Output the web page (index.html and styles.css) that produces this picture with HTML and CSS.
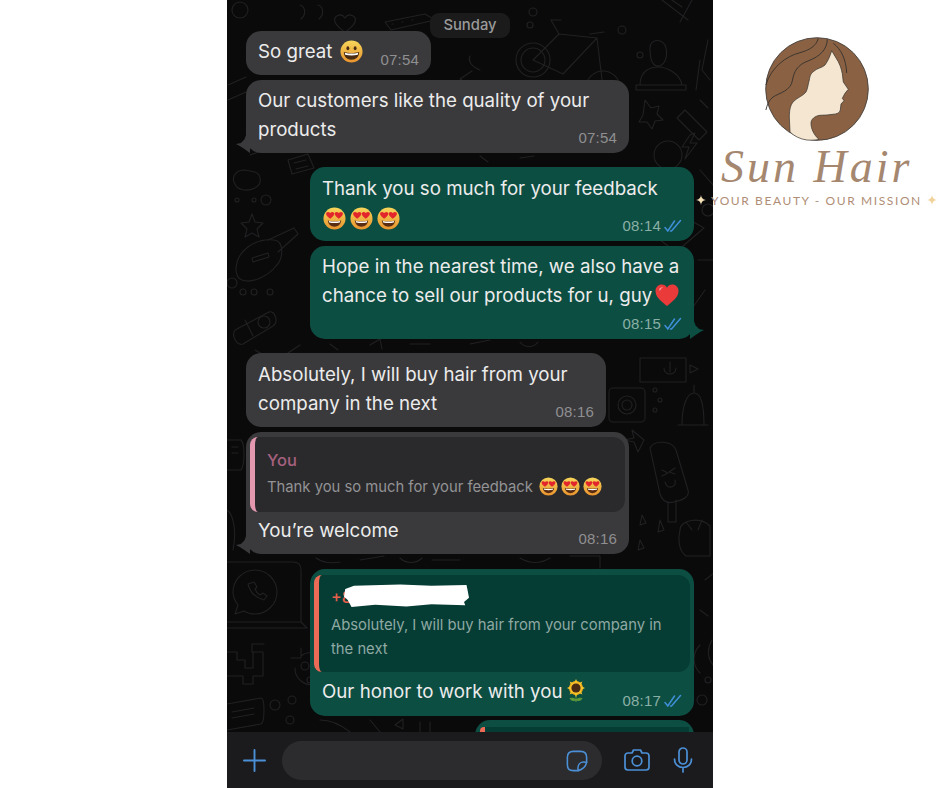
FILE: index.html
```html
<!DOCTYPE html>
<html lang="en">
<head>
<meta charset="utf-8">
<title>Sun Hair customer feedback</title>
<link rel="stylesheet" href="styles.css">
</head>
<body>
<svg class="defs" width="0" height="0" aria-hidden="true">
  <defs>
    <linearGradient id="face" x1="0" y1="0" x2="0" y2="1">
      <stop offset="0" stop-color="#f7d65a"/><stop offset="1" stop-color="#e8932e"/>
    </linearGradient>
    <symbol id="grin" viewBox="0 0 24 24">
      <circle cx="12" cy="12" r="11.5" fill="url(#face)"/>
      <ellipse cx="8.2" cy="8.6" rx="1.5" ry="2.2" fill="#4a2c12"/>
      <ellipse cx="15.8" cy="8.6" rx="1.5" ry="2.2" fill="#4a2c12"/>
      <path d="M4 12.5c5 1.6 11 1.6 16 0 0 5-3.4 8-8 8s-8-3-8-8z" fill="#4a2c12"/>
      <path d="M5 13.2c4.600 1.300 9.400 1.300 14 0l-.4 2.300c-4.200 1-9 1-13.200 0z" fill="#fff"/>
    </symbol>
    <symbol id="love" viewBox="0 0 24 24">
      <circle cx="12" cy="12" r="11.5" fill="url(#face)"/>
      <path d="M5 14c4.500 1.200 9.500 1.200 14 0-.4 4-3.300 6.500-7 6.500S5.400 18 5 14z" fill="#5a2c12"/>
      <path d="M6 14.500c4 .9 8 .9 12 0l-.5 1.600c-3.600.7-7.400.7-11 0z" fill="#fff"/>
      <path d="M7.500 12.200C5.200 10.500 3.200 9 3.200 7c0-1.600 2.300-2.600 4.300-.8 2-1.800 4.300-.8 4.300.8 0 2-2 3.500-4.300 5.200z" fill="#e2262c"/>
      <path d="M16.500 12.200c-2.300-1.700-4.300-3.200-4.300-5.200 0-1.600 2.300-2.600 4.300-.8 2-1.800 4.300-.8 4.300.8 0 2-2 3.500-4.300 5.200z" fill="#e2262c"/>
    </symbol>
    <symbol id="heart" viewBox="0 0 24 24">
      <path d="M12 23C5 17.500.5 13.500.5 8 .5 4 3.500 1.500 6.700 1.500c2.300 0 4.200 1.200 5.300 3.200 1.100-2 3-3.200 5.300-3.200 3.200 0 6.200 2.500 6.200 6.500 0 5.500-4.500 9.500-11.500 15z" fill="#ea3a3a"/>
      <path d="M4 6.500C5 4.500 7 4 8 4.500 6.500 5 5.500 6 5 8z" fill="#f7a0a0"/>
    </symbol>
    <symbol id="sunflower" viewBox="0 0 22 24">
      <path d="M11 17v6M11 21c-2-2-4-2-6-1.500 1 2 3.500 2.500 6 1.500zm0 0c2-2 4-2 6-1.500-1 2-3.500 2.500-6 1.500z" fill="#5f9a3a" stroke="#5f9a3a"/>
      <circle cx="11" cy="9" r="7" fill="#f0ad1a"/>
      <g fill="#f8c22a">
        <path d="M11 0l2.400 5h-4.800zM11 18l2.400-5H8.600zM2 9l5-2.400v4.800zM20 9l-5-2.400v4.800zM4.600 2.600l5 2.200-2.800 2.800zM17.400 2.600l-5 2.200 2.800 2.800zM4.600 15.400l5-2.200-2.800-2.800zM17.400 15.400l-5-2.200 2.800-2.800z"/>
      </g>
      <circle cx="11" cy="9" r="4.600" fill="#4a2a14"/>
    </symbol>
    <symbol id="ticks" viewBox="0 0 18 14">
      <path d="M1 8.500l2.800 3.500L10.500 2M6.500 12l1 0L16.500 1.500" fill="none" stroke="#3f8fd8" stroke-width="1.500" stroke-linecap="round"/>
    </symbol>
    <symbol id="spark" viewBox="0 0 12 12">
      <path d="M6 0c.4 3.500 2 5.300 6 6-4 .7-5.600 2.500-6 6-.4-3.500-2-5.300-6-6 4-.7 5.600-2.500 6-6z"/>
    </symbol>
  </defs>
</svg>

<div class="page">
  <div class="side"></div>

  <main class="phone">
    <section class="chat">
      <svg class="doodles" viewBox="0 0 486 732" aria-hidden="true">
        <g transform="translate(-227 0)" fill="none" stroke="#212123" stroke-width="1.100" stroke-linecap="round" stroke-linejoin="round">
          <circle cx="533" cy="60" r="17"/><circle cx="533" cy="60" r="12"/><circle cx="603" cy="88" r="17"/>
          <path d="M533 60l26-26 38 4-34 36-30-14M559 34l-8-14h10M597 38l6 50M590 34l14-2"/>
          <circle cx="640" cy="55" r="3"/><circle cx="622" cy="30" r="4"/><circle cx="533" cy="12" r="4"/><circle cx="530" cy="25" r="3"/>
          <path d="M650 48c0-10 14-10 16 0 2 10-2 18-8 18s-8-8-8-18zM640 85c0-14 10-18 18-18s22 6 24 18zM636 85h50v5h-50z"/>
          <path d="M662 0l26 20M672 0l10 7M692 0l-12 22"/>
          <path d="M645 100l6 8 8-2-2 8 6 6-8 1-3 8-5-7-8 0 4-7z"/>
          <path d="M685 110l22 22-8 8-22-22zM700 100l8 8"/>
          <path d="M690 135l-8 12h7l-4 12 12-16h-7l5-10z"/>
          <circle cx="668" cy="155" r="14"/>
          <circle cx="240" cy="10" r="8"/><path d="M300 5c6 2 6 10 1 14M318 5c6 2 6 10 1 14"/>
          <path d="M345 18c-4-6-12-2-10 4 2 5 8 8 10 11 2-3 8-6 10-11 2-6-6-10-10-4z"/>
          <path d="M385 22l40-8 10 6-44 10zM392 24h1M402 22h1M412 20h1"/>
          <path d="M228 85l18-8M228 100l18-8"/>
          <path d="M480 70c-10-4-12-10-10-14M470 85l-10-6 12-8"/>
          <path d="M245 170c-10 0-14 8-10 14 2 6 12 8 20 4 8-4 6-14 0-16z"/>
          <path d="M288 160l20-6 6 14-22 6zM294 163l12-3M296 169l12-3"/>
          <path d="M252 214l3 8 8 1-6 6 2 8-7-4-7 4 2-8-6-6 8-1z"/>
          <circle cx="266" cy="200" r="5"/><circle cx="254" cy="200" r="2"/><circle cx="237" cy="200" r="2"/>
          <path d="M236 270c0-20 20-32 38-30 10 1 10 18 2 26-8 10-24 18-34 14-4-1-6-6-6-10z"/><path d="M252 258l16-5 1 4-16 5z"/>
          <path d="M268 240l26-12 4 6-20 18"/>
          <path d="M235 330l34-18c6-2 10 10 4 14l-30 18c-6 2-12-8-8-14zM245 320l8 16"/><circle cx="264" cy="322" r="6"/>
          <path d="M255 350l14 8M300 345l-12 8"/>
          <circle cx="232" cy="283" r="5"/><circle cx="243" cy="292" r="3"/><circle cx="254" cy="292" r="3"/><circle cx="270" cy="292" r="3"/>
          <rect x="609" y="388" width="36" height="34" rx="4"/><circle cx="627" cy="405" r="9"/><circle cx="627" cy="405" r="5"/>
          <path d="M682 425c0-22 6-32 12-32s10 10 10 32zM678 425h30M694 393v-8"/>
          <path d="M640 358h46v24h-46zM670 362v10M664 368c0 8 12 8 12 0M690 365l8 4-8 4z"/>
          <path d="M632 430l12 10-6 12-4-10-10-2 10-2z"/><circle cx="655" cy="390" r="2"/><circle cx="660" cy="400" r="2"/><circle cx="655" cy="410" r="2"/>
          <path d="M650 448c4-8 22-8 26 2l12 40c2 6-4 10-14 12-8 2-12-2-14-8zM668 502v20h8v-22"/>
          <path d="M662 470l6 3-6 3M675 468l-6 4 6 2M665 482c2 8 12 6 10-2"/>
          <path d="M680 530c0-10 20-14 30-4v30h-24c-8-6-8-18-6-26zM686 522l6 8M702 520l-4 10"/>
          <path d="M642 515l4 8-6 2zM640 540l4 8-6 2zM660 520l4 10-6 2z"/>
          <path d="M227 440h14c4 4 4 24 0 30h-14M232 447h6M232 453h6"/>
          <path d="M227 510c6 4 10 20 6 40"/>
          <path d="M227 562h66c6 0 8 3 8 8v52H227M301 622l6 6h-80"/>
          <path d="M233 592c0-12 10-22 22-22s22 10 22 22-10 22-22 22c-4 0-8-1-11-3l-9 3 3-9c-3-4-5-8-5-13z"/>
          <path d="M248 584c2 8 8 14 16 16l3-4-4-3-3 2c-2-1-4-3-5-6l2-2-3-5z"/>
          <path d="M227 652h10v8h8v8h8v-16h10v24h-10v8h-10v-8h-26M252 652v-8h12"/>
          <path d="M295 668a16 16 0 1 0 6-12M301 648v10h-10"/>
          <circle cx="305" cy="666" r="4"/><circle cx="310" cy="680" r="3"/>
          <path d="M227 704l34-6c4 0 4 24 0 26l-34 6M232 712l22-4M232 718l22-4"/>
          <circle cx="275" cy="705" r="5"/><circle cx="292" cy="700" r="4"/><circle cx="290" cy="720" r="4"/>
          <path d="M320 720c10 0 20 4 30 12M370 720l10 12M395 725l8-6v10zM420 722v10M430 722v10"/>
          <path d="M316 558c6 4 14 6 24 4M360 560l24-4M400 558c6 6 16 6 22 0M432 560l28 0M520 558c10 6 20 6 30 0M570 556h30v12"/>
          <path d="M330 344l8 6M370 345l10-6 2 10M410 344h20M470 344l20-4M520 342c4 6 14 6 18 0"/>
          <path d="M660 240l30-20 14 8-28 24zM698 260h16v40M705 290l-14 20"/>
          <circle cx="708" cy="210" r="6"/>
          <path d="M670 180l-12 8M700 170l14 16"/>
          <path d="M480 156l8 6M520 158l14-2M250 155l28-10"/>
          <path d="M700 645c-8 8-8 20 0 28M705 580l10-8M700 610l8 6M712 640c-6 10-4 20 2 26"/>
          <circle cx="702" cy="700" r="5"/><circle cx="708" cy="680" r="3"/>
          <path d="M700 60l-4 30M708 40l-6 30 8 10"/>
        </g>
      </svg>

      <div class="day">Sunday</div>

      <article class="bubble in w-great">
        <p class="text">So great <svg class="emoji grin"><use href="#grin"/></svg></p>
        <span class="meta"><span class="time">07:54</span></span>
      </article>

      <article class="bubble in w-wide tail gap-s">
        <p class="text">Our customers like the quality of your<br>products</p>
        <span class="meta"><span class="time">07:54</span></span>
      </article>

      <article class="bubble out w-wide roomy gap-l">
        <p class="text">Thank you so much for your feedback</p>
        <div class="emoji-row">
          <svg class="emoji"><use href="#love"/></svg>
          <svg class="emoji"><use href="#love"/></svg>
          <svg class="emoji"><use href="#love"/></svg>
        </div>
        <span class="meta"><span class="time">08:14</span><svg class="ticks"><use href="#ticks"/></svg></span>
      </article>

      <article class="bubble out w-wide tail tall gap-s">
        <p class="text">Hope in the nearest time, we also have a<br>chance to sell our products for u, guy<svg class="emoji heart"><use href="#heart"/></svg></p>
        <span class="meta"><span class="time">08:15</span><svg class="ticks"><use href="#ticks"/></svg></span>
      </article>

      <article class="bubble in w-buy roomy gap-l">
        <p class="text">Absolutely, I will buy hair from your<br>company in the next</p>
        <span class="meta"><span class="time">08:16</span></span>
      </article>

      <article class="bubble in w-wide tail has-quote gap-s">
        <div class="quote quote-you">
          <div class="quote-name">You</div>
          <div class="quote-line">Thank you so much for your feedback
            <svg class="emoji small first"><use href="#love"/></svg><svg class="emoji small"><use href="#love"/></svg><svg class="emoji small"><use href="#love"/></svg></div>
        </div>
        <p class="text">You’re welcome</p>
        <span class="meta"><span class="time">08:16</span></span>
      </article>

      <article class="bubble out w-wide has-quote quoted-out gap-xl">
        <div class="quote quote-them">
          <div class="quote-name">+84</div>
          <div class="quote-line">Absolutely, I will buy hair from your company in<br>the next</div>
          <span class="redact"></span>
        </div>
        <p class="text">Our honor to work with you<svg class="emoji flower"><use href="#sunflower"/></svg></p>
        <span class="meta"><span class="time">08:17</span><svg class="ticks"><use href="#ticks"/></svg></span>
      </article>

      <article class="bubble out w-last gap-xs">
        <div class="quote quote-them stub"></div>
      </article>
    </section>

    <footer class="composer">
      <svg class="icon plus" viewBox="0 0 24 24"><path d="M12 1v22M1 12h22"/></svg>
      <div class="field">
        <svg class="icon sticker" viewBox="0 0 24 24"><path d="M8 1.500h8c4 0 6.500 2.500 6.500 6.500v5.500c-1 4.500-5 8-9.500 9H8c-4 0-6.500-2.500-6.500-6.500V8C1.500 4 4 1.500 8 1.500z"/><path d="M22.500 13.500c-1-.5-2-.5-3-.5-4 0-6.500 3-6.500 6.500 0 1 0 2 .5 3"/></svg>
      </div>
      <svg class="icon camera" viewBox="0 0 26 24"><path d="M4 5h4l1.500-3h7L18 5h4c1.700 0 3 1.300 3 3v11c0 1.700-1.300 3-3 3H4c-1.700 0-3-1.300-3-3V8c0-1.700 1.300-3 3-3z"/><circle cx="13" cy="13" r="4.800"/></svg>
      <svg class="icon mic" viewBox="0 0 20 26"><rect x="6" y="1" width="8" height="16" rx="4"/><path d="M1.500 12c0 5 3.500 8.500 8.500 8.500s8.500-3.500 8.500-8.500M10 20.500V25"/></svg>
    </footer>
  </main>

  <aside class="brand">
    <svg class="logo" viewBox="0 0 104 104" aria-hidden="true">
      <circle cx="52" cy="52" r="51.300" fill="#8a6243" stroke="#45423f" stroke-width=".9"/>
      <path d="M66.700 13.700 73.300 24.700C76 30 77.500 36 77.700 40L78.300 45 83.300 52.300 80 56.300 77.300 61.300 79 63.700 76 67 75.300 73C74.800 76 72 77 68 77.300L61.700 78 55 78.300C50 79 46 82 46 86.300 46 92 49 98 54 102.500 50 103.200 46 103.300 41.700 103 35 102 29 99 25 95L24.300 80C24.500 72 25.500 68 28.300 64.700 33 60 38 59 41 55 43 51 43 47 44.300 43 45 38 46.500 36 48.300 34.700 52 31 57 31 60 28 63 24 65 19 66.700 13.700z" fill="#f4e6d0" stroke="#33302c" stroke-width=".7"/>
      <g fill="none" stroke="#33302c" stroke-width=".9">
        <path d="M53.300 1.500C51 9 45 13 34 16 22 19 6 30 .9 48"/>
        <path d="M62.300 2.300C62 12 56 19 43 24 32 28 29 35 27.500 43 26 54 14 56 8 60 4 63 2 68 .9 73"/>
        <path d="M68.300 6.300C76 12 81 22 81.700 36"/>
      </g>
    </svg>
    <div class="wordmark">Sun Hair</div>
    <div class="tagline">
      <svg class="spark light"><use href="#spark"/></svg>
      <span>YOUR BEAUTY - OUR MISSION</span>
      <svg class="spark gold"><use href="#spark"/></svg>
    </div>
  </aside>
</div>
</body>
</html>
```

FILE: styles.css
```css
* { box-sizing: border-box; }
html, body { margin: 0; height: 788px; overflow: hidden; background: #fff; }
.defs { display: block; height: 0; }
.page { display: flex; width: 940px; height: 788px; }
.side { width: 227px; flex: none; }

/* phone */
.phone { width: 486px; flex: none; height: 788px; display: flex; flex-direction: column; background: #0a0a0b; font-family: Inter, "Liberation Sans", sans-serif; }
.chat { position: relative; flex: none; height: 732px; overflow: hidden; display: flex; flex-direction: column; padding: 13px 19px 0; }
.doodles { position: absolute; left: 0; top: 0; width: 486px; height: 732px; }

.day { position: relative; align-self: center; height: 25px; width: 80px; margin-bottom: -7px; border-radius: 9px; background: #1b1b1c; color: #9a9a9a; font-size: 14.800px; font-weight: 500; line-height: 25px; text-align: center; }

.bubble { position: relative; flex: none; border-radius: 15px; padding: 6px 12px 9px; }
.bubble.in { align-self: flex-start; background: #3a3a3c; }
.bubble.out { align-self: flex-end; background: #0d4e42; }
.roomy { padding-top: 7px; padding-bottom: 9px; }
.w-great { width: 185px; height: 44px; }
.w-wide { width: 383px; }
.out.w-wide { width: 384px; }
.w-buy { width: 360px; }
.w-last { width: 219px; height: 40px; padding: 7px 5px 0; }
.tall { height: 93px; }
.gap-xs { margin-top: 4px; }
.gap-s { margin-top: 5px; }
.gap-l { margin-top: 14px; }
.gap-xl { margin-top: 15px; }

.text { margin: 0; color: #ececec; font-size: 18.700px; line-height: 29px; white-space: nowrap; }
.emoji-row { display: flex; gap: 4px; height: 29px; padding-top: 4px; margin-left: 1px; }
.emoji { width: 23px; height: 23px; flex: none; vertical-align: middle; }
.grin { margin: -2px 0 0 2px; }
.heart { width: 24px; height: 24px; margin: -4px 0 0 3px; }
.flower { width: 22px; height: 24px; margin: -4px 0 0 3px; }

.meta { position: absolute; right: 12px; bottom: 6px; display: flex; align-items: center; gap: 3px; line-height: 19px; }
.time { color: #8f8f91; font-family: "Liberation Sans", sans-serif; font-size: 15px; letter-spacing: .2px; }
.out .time { color: #8ab0a6; }
.ticks { width: 18px; height: 14px; }

/* tails */
.tail::after { content: ""; position: absolute; bottom: 0; width: 14px; height: 18px; background: inherit; }
.in.tail::after { left: -10px; clip-path: polygon(72% 0, 100% 0, 100% 100%, 65% 80%, 30% 62%, 0 50%, 35% 44%, 60% 25%); }
.out.tail::after { right: -10px; clip-path: polygon(28% 0, 0 0, 0 100%, 35% 80%, 70% 62%, 100% 50%, 65% 44%, 40% 25%); }

/* quoted messages */
.has-quote { padding: 5px 4px 0; }
.has-quote .text { padding: 4px 8px 9px; }
.quoted-out { padding-top: 6px; }
.quoted-out .text { padding: 5px 8px 10px; }
.quote { position: relative; border-radius: 8px 12px 12px 8px; padding: 0 0 0 12px; border-left: 5px solid; }
.quote-you { height: 75px; background: #2a2a2c; border-left-color: #e498b0; }
.quote-them { height: 97px; background: #053c34; border-left-color: #ec6b57; }
.quote-name { font-size: 16.500px; font-weight: 500; line-height: 24px; padding-top: 11px; height: 37px; }
.quote-you .quote-name { color: #a5607e; }
.quote-them .quote-name { color: #e8604c; font-size: 16px; padding-top: 10px; height: 37px; }
.quote-line { color: #939395; font-size: 14.800px; line-height: 24px; white-space: nowrap; padding-top: 1px; }
.quote-them .quote-line { color: #8fa9a3; }
.small { width: 19px; height: 19px; margin: -3px 0 0 3px; }
.small.first { margin-left: 2px; }
.redact { position: absolute; left: 25px; top: 9px; width: 125px; height: 23px; background: #fff; clip-path: polygon(1% 22%, 8% 8%, 30% 4%, 45% 2%, 70% 8%, 98% 4%, 99% 30%, 100% 60%, 96% 78%, 97% 92%, 70% 88%, 50% 98%, 25% 90%, 6% 100%, 3% 70%, 0 55%); }
.stub { height: 30px; border-radius: 4px 0 0 0; }

/* composer */
.composer { flex: none; height: 56px; background: #1b1b1d; display: flex; align-items: center; padding: 0 20px 0 16px; }
.icon { flex: none; fill: none; stroke: #4b90d6; stroke-width: 1.700; stroke-linecap: round; stroke-linejoin: round; }
.plus { width: 23px; height: 23px; stroke-width: 2; }
.field { width: 322px; height: 39px; margin: 1px 22px 0 16px; border-radius: 20px; background: #2c2c2e; display: flex; align-items: center; justify-content: flex-end; padding-right: 14px; }
.sticker { width: 22px; height: 22px; }
.camera { width: 26px; height: 24px; }
.mic { width: 20px; height: 26px; margin-left: 23px; }

/* brand */
.brand { position: relative; width: 227px; flex: none; display: flex; flex-direction: column; padding-top: 37px; }
.logo { width: 104px; height: 104px; flex: none; margin-left: 52px; }
.wordmark { margin: 6px 0 0 8px; height: 40px; color: #a5876f; font-family: "Liberation Serif", serif; font-style: italic; font-size: 46px; line-height: 40px; letter-spacing: 3px; white-space: nowrap; }
.tagline { display: flex; align-items: center; gap: 5px; margin: 5px 0 0 -17px; height: 16px; color: #b08e76; font-family: Lato, "Liberation Sans", sans-serif; font-size: 12px; letter-spacing: 1.600px; white-space: nowrap; }
.spark { width: 10px; height: 12px; flex: none; }
.spark.light { fill: #f6e2b8; }
.spark.gold { fill: #f0d29a; }
```
